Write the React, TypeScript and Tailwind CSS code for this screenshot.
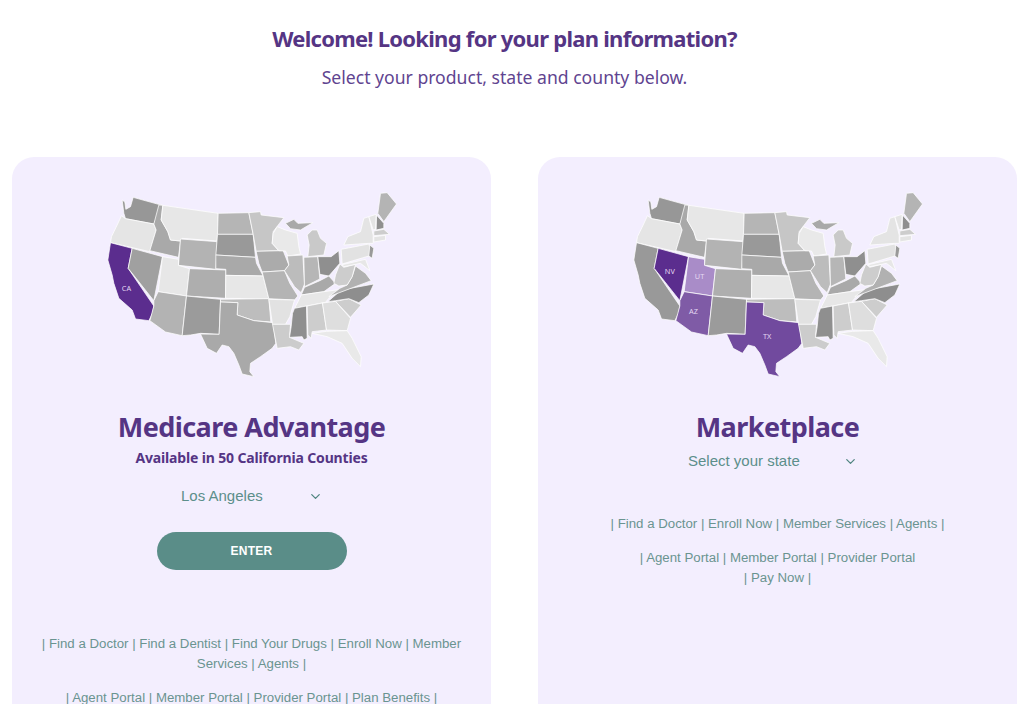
import type { ReactNode } from "react";
import { ChevronDown } from "lucide-react";

const G: Record<string, [string, string]> = {
  WA: ["#979797", "95,60 103,66 106,88 120,80 128,52 215,76 190,132 105,116 100,100"],
  OR: ["#e5e5e5", "93,107 105,116 190,132 197,150 178,215 60,188 63,170 80,135"],
  CA: ["#999999", "60,188 125,205 113,265 190,378 186,400 175,422 135,417 125,390 85,355 70,310 65,285 52,240"],
  NV: ["#a0a0a0", "125,205 216,230 190,362 113,265"],
  ID: ["#a9a9a9", "205,75 217,76 212,120 232,155 240,180 270,183 264,232 178,212 197,150 190,132"],
  MT: ["#e7e7e7", "217,76 383,100 380,183 275,175 270,183 240,180 232,155 212,120"],
  WY: ["#b3b3b3", "270,177 380,185 376,268 264,256"],
  UT: ["#e7e7e7", "216,230 264,238 264,256 297,266 288,348 203,335"],
  CO: ["#aeaeae", "297,266 406,270 405,355 288,348"],
  AZ: ["#b3b3b3", "203,335 288,348 275,467 225,456 178,422 190,378 190,362"],
  NM: ["#9b9b9b", "288,348 390,358 386,463 330,460 300,465 275,467"],
  ND: ["#b5b5b5", "383,100 475,98 488,163 381,163"],
  SD: ["#999999", "381,163 488,163 495,232 376,225"],
  NE: ["#a9a9a9", "376,225 495,232 498,250 518,288 406,286 406,268 376,266"],
  KS: ["#e7e7e7", "406,286 518,288 535,356 405,355"],
  OK: ["#bdbdbd", "390,358 535,356 541,426 490,422 440,405 442,368 390,366"],
  TX: ["#a9a9a9", "390,366 442,368 440,405 490,422 548,428 556,490 545,505 510,530 480,550 478,575 490,590 455,582 445,555 430,520 415,500 395,495 378,520 350,505 330,462 386,463"],
  MN: ["#c6c6c6", "475,98 510,95 512,105 580,113 548,155 545,190 565,212 497,214 488,163"],
  IA: ["#ababab", "497,214 578,212 595,255 582,272 515,276 505,250"],
  MO: ["#b4b4b4", "515,276 582,272 598,310 622,348 612,360 535,356"],
  AR: ["#e2e2e2", "535,358 612,360 598,410 585,433 546,433"],
  LA: ["#cccccc", "546,433 600,433 597,472 640,490 625,510 600,500 560,505"],
  WI: ["#e9e9e9", "548,160 560,140 585,150 620,160 625,200 630,222 592,228 585,213 565,212 545,190"],
  IL: ["#bcbcbc", "590,228 637,225 642,312 632,338 612,320 582,272 595,255"],
  IN: ["#b6b6b6", "640,232 682,230 688,297 642,320"],
  MIL: ["#c9c9c9", "650,165 665,150 680,150 690,175 708,190 700,225 652,230 656,195"],
  MIU: ["#a9a9a9", "585,130 610,118 622,130 667,128 630,150 600,146"],
  OH: ["#8f8f8f", "682,230 722,230 745,212 748,250 715,288 688,283"],
  KY: ["#a9a9a9", "632,345 642,322 688,302 715,288 735,310 700,335"],
  TN: ["#e7e7e7", "612,385 625,360 632,345 700,335 752,328 715,355 705,367 648,378"],
  MS: ["#8f8f8f", "606,400 612,385 648,378 650,475 640,480 635,470 597,472 602,440"],
  AL: ["#cdcdcd", "650,378 696,369 708,450 665,455 662,475 652,465"],
  GA: ["#dedede", "696,369 735,364 780,415 770,452 708,450"],
  FL: ["#e9e9e9", "665,460 708,454 770,452 785,475 812,530 810,560 785,535 755,490 710,470"],
  SC: ["#cdcdcd", "735,364 775,356 812,375 780,412"],
  NC: ["#8e8e8e", "712,365 752,330 850,312 835,345 805,368 775,356 735,362"],
  VA: ["#b1b1b1", "715,350 748,325 770,315 785,290 795,258 825,280 842,302"],
  WV: ["#cdcdcd", "730,310 735,285 748,252 760,262 795,253 785,290 770,315 745,318"],
  PA: ["#e2e2e2", "752,208 835,192 845,225 755,252"],
  NY: ["#e4e4e4", "760,195 772,170 810,155 820,115 835,110 848,165 848,190 835,190"],
  NJ: ["#999999", "838,195 850,205 845,235 835,228"],
  MD: ["#e7e7e7", "755,254 825,238 838,272 810,250 795,253 760,260"],
  ME: ["#b4b4b4", "870,40 890,38 918,72 880,125 862,100"],
  NH: ["#8f8f8f", "858,105 880,130 880,145 857,150"],
  VT: ["#e4e4e4", "835,110 857,103 855,148 848,150"],
  MA: ["#cdcdcd", "850,153 880,148 897,163 850,167"],
  CT: ["#e4e4e4", "850,170 885,166 885,180 850,186"],
};

function UsMap({ fills, labels }: { fills: Record<string, string>; labels: [string, number, number][] }) {
  return (
    <svg viewBox="4.5 0 960 630" className="block w-[320px] h-[210px] mx-auto">
      {Object.entries(G).map(([k, [c, p]]) => (
        <polygon key={k} points={p} fill={fills[k] ?? c} stroke="#ffffff" strokeWidth="2.2" strokeLinejoin="round" />
      ))}
      {labels.map(([t, x, y]) => (
        <text key={t} x={x} y={y} fill="#e4d8f2" fontSize="22" textAnchor="middle" fontFamily="'Noto Sans', sans-serif">
          {t}
        </text>
      ))}
    </svg>
  );
}

const head = "font-['Noto_Sans',sans-serif]";

function Line({ children, cls }: { children: ReactNode; cls?: string }) {
  return <p className={"m-0 text-center text-[13.25px] leading-[20px] text-[#6a9490] " + (cls ?? "")}>{children}</p>;
}

function Select({ label, cls }: { label: string; cls: string }) {
  return (
    <div className={"flex items-center justify-between text-[15px] text-[#5c8f8b] " + cls}>
      <span>{label}</span>
      <ChevronDown size={15} strokeWidth={2} className="text-[#4f8480]" />
    </div>
  );
}

export default function App() {
  return (
    <div className="w-[1024px] h-[704px] overflow-hidden bg-white font-['Liberation_Sans',sans-serif]">
      <header className="w-[1009px] h-[157px] pt-[23px] text-center">
        <h1 className={head + " m-0 text-[22px] leading-[30px] font-bold tracking-[-0.73px] text-[#553584]"}>Welcome! Looking for your plan information?</h1>
        <p className={head + " m-0 mt-[11px] text-[17.6px] leading-[26px] text-[#5f4490]"}>Select your product, state and county below.</p>
      </header>
      <main className="flex gap-[47px] pl-[12px]">
        <section className="w-[479px] h-[600px] shrink-0 rounded-[22px] bg-[#f3eefe] pt-[23px]">
          <UsMap fills={{ CA: "#5b2d8e" }} labels={[["CA", 108, 332]]} />
          <h2 className={head + " m-0 mt-[19px] text-center text-[27px] leading-[36px] font-bold tracking-[-0.55px] text-[#553584]"}>Medicare Advantage</h2>
          <h3 className={head + " m-0 mt-[2px] text-center text-[14px] leading-[22px] font-bold tracking-[-0.15px] text-[#553584]"}>Available in 50 California Counties</h3>
          <Select label="Los Angeles" cls="w-[142px] ml-[169px] mt-[15px] h-[24px]" />
          <button className="block mx-auto mt-[24px] w-[190px] h-[38px] rounded-full bg-[#5a8d88] text-white text-[12px] font-bold tracking-[0.3px]">ENTER</button>
          <div className="px-[24px] mt-[64px]">
            <Line>| Find a Doctor | Find a Dentist | Find Your Drugs | Enroll Now | Member Services | Agents |</Line>
            <Line cls="mt-[14px]">| Agent Portal | Member Portal | Provider Portal | Plan Benefits |</Line>
          </div>
        </section>
        <section className="w-[479px] h-[600px] shrink-0 rounded-[22px] bg-[#f3eefe] pt-[23px]">
          <UsMap
            fills={{ NV: "#5b2d8e", UT: "#a98cc8", AZ: "#7f5ba6", TX: "#714a9e" }}
            labels={[["NV", 160, 281], ["UT", 249, 298], ["AZ", 231, 402], ["TX", 452, 478]]}
          />
          <h2 className={head + " m-0 mt-[19px] text-center text-[27px] leading-[36px] font-bold tracking-[-0.55px] text-[#553584]"}>Marketplace</h2>
          <Select label="Select your state" cls="w-[170px] ml-[150px] mt-[4px] h-[24px]" />
          <div className="px-[24px] mt-[41px]">
            <Line>| Find a Doctor | Enroll Now | Member Services | Agents |</Line>
            <Line cls="mt-[14px]">
              | Agent Portal | Member Portal | Provider Portal
              <br />| Pay Now |
            </Line>
          </div>
        </section>
      </main>
    </div>
  );
}
